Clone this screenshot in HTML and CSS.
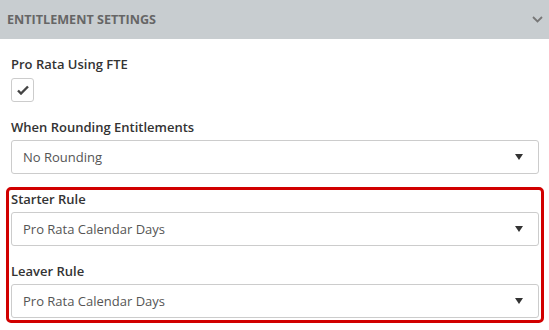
FILE: index.html
```html
<!DOCTYPE html>
<html lang="en">
<head>
    <meta charset="UTF-8">
    <title>Entitlement Settings</title>
    <link rel="stylesheet" href="styles.css">
</head>
<body>
    <div class="panel">
        <div class="panel-head">
            <span>Entitlement Settings</span>
            <svg class="chev" width="11" height="7" viewBox="0 0 11 7"><path d="M1 1l4.5 4.5L10 1" fill="none" stroke="#777" stroke-width="1.8"/></svg>
        </div>
        <div class="panel-body">
            <div class="field field-check">
                <label>Pro Rata Using FTE</label>
                <div class="check">
                    <svg width="12" height="10" viewBox="0 0 12 10"><path d="M1 5.5l3 3L11 1.5" fill="none" stroke="#444" stroke-width="2.4"/></svg>
                </div>
            </div>
            <div class="field">
                <label>When Rounding Entitlements</label>
                <div class="select">No Rounding<span class="caret"></span></div>
            </div>
            <div class="highlight">
                <div class="field">
                    <label>Starter Rule</label>
                    <div class="select">Pro Rata Calendar Days<span class="caret"></span></div>
                </div>
                <div class="field">
                    <label>Leaver Rule</label>
                    <div class="select">Pro Rata Calendar Days<span class="caret"></span></div>
                </div>
            </div>
        </div>
    </div>
</body>
</html>
```

FILE: styles.css
```css
*{
    padding: 0;
    margin: 0;
    box-sizing: border-box;
}
body{
    font-family: "Open Sans", sans-serif;
    background-color: #fff;
    color: #333;
}
.panel-head{
    height: 39px;
    background-color: #c8cdd0;
    display: flex;
    align-items: center;
    justify-content: space-between;
    padding: 0 6px 0 7px;
}
.panel-head span{
    font-size: 12.6px;
    font-weight: 700;
    text-transform: uppercase;
    color: #666;
}
.panel-body{
    padding: 16px 10px 0 11px;
}
.field{
    margin-bottom: 16px;
}
.field label{
    display: block;
    font-size: 13px;
    font-weight: 600;
    line-height: 18px;
    margin-bottom: 4px;
}
.field-check label{
    margin-bottom: 5px;
}
.check{
    width: 23px;
    height: 24px;
    border: 1px solid #ccc;
    border-radius: 3px;
    display: flex;
    align-items: center;
    justify-content: center;
}
.select{
    height: 34px;
    border: 1px solid #ccc;
    border-radius: 3px;
    font-size: 13px;
    color: #555;
    display: flex;
    align-items: center;
    justify-content: space-between;
    padding: 0 15px 0 11px;
}
.caret{
    width: 0;
    height: 0;
    border-left: 4px solid transparent;
    border-right: 4px solid transparent;
    border-top: 6px solid #333;
}
.highlight{
    margin: -3px -5px 0 -5px;
    border: 3px solid #d10000;
    border-radius: 5px;
    padding: 0 2px 2px 2px;
}
.highlight .field{
    margin-bottom: 0;
}
.highlight .field + .field{
    margin-top: 16px;
}
```
